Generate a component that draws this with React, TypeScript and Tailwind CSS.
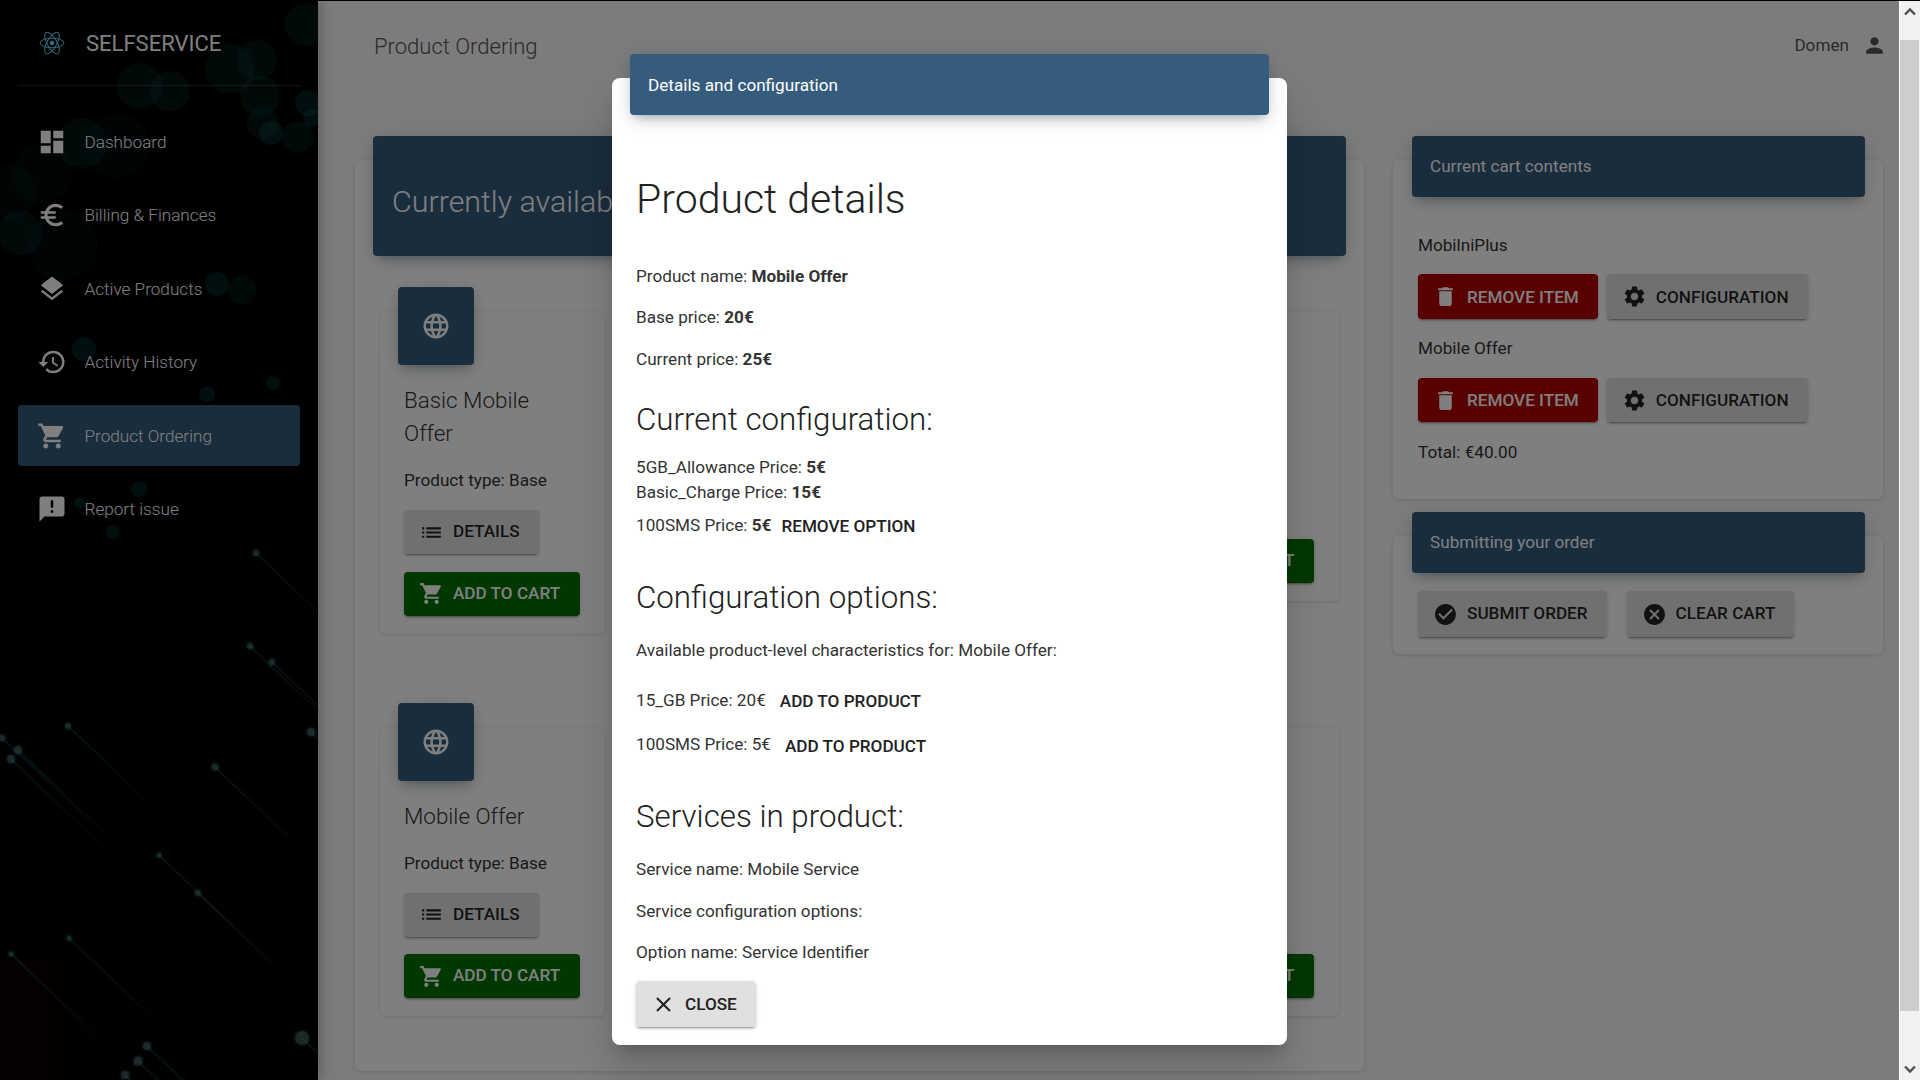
import React from "react";
import {
  MdDashboard, MdEuroSymbol, MdLayers, MdHistory, MdShoppingCart, MdAnnouncement, MdPerson,
  MdLanguage, MdList, MdDelete, MdSettings, MdCheckCircle, MdCancel, MdClose,
} from "react-icons/md";

const raised = "shadow-[0_2px_2px_rgba(0,0,0,.14),0_3px_1px_-2px_rgba(0,0,0,.2),0_1px_5px_rgba(0,0,0,.12)]";
const soft = "shadow-[0_1px_4px_rgba(0,0,0,.14)]";
const lifted = "shadow-[0_4px_20px_rgba(0,0,0,.14),0_7px_10px_-5px_rgba(56,94,128,.4)]";

const bokeh: [number, number, number][] = [
  [306, 24, 21], [230, 68, 25], [257, 59, 20], [140, 85, 23], [170, 90, 20], [260, 95, 20], [308, 102, 13],
  [263, 122, 16], [271, 132, 12], [298, 136, 16], [312, 117, 9], [82, 142, 25], [117, 145, 32], [43, 172, 30],
  [10, 192, 27], [63, 245, 35], [20, 232, 22], [217, 283, 12], [242, 289, 14], [84, 348, 12], [207, 393, 8],
  [273, 382, 7], [139, 488, 8], [80, 502, 6], [113, 531, 7],
];
const sparks: [number, number, number][] = [
  [256, 552, 3], [250, 645, 3], [272, 661, 3], [311, 731, 4], [68, 725, 3], [2, 737, 3], [18, 749, 4], [11, 758, 4],
  [215, 766, 3.5], [159, 854, 2.5], [198, 892, 3], [69, 937, 2.5], [11, 953, 2.5], [302, 1037, 7], [147, 1045, 4], [138, 1060, 4.5], [125, 1074, 4],
];

function SidebarArt() {
  return (
    <svg className="absolute inset-0" width="318" height="1079" viewBox="0 0 318 1079">
      <defs>
        <linearGradient id="redglow" x1="0" y1="0" x2="1" y2="0">
          <stop offset="0" stopColor="#5a0018" stopOpacity="0.16" />
          <stop offset="1" stopColor="#5a0018" stopOpacity="0" />
        </linearGradient>
        <linearGradient id="trail" x1="0" y1="0" x2="1" y2="1">
          <stop offset="0" stopColor="#2a7a90" stopOpacity="0.3" />
          <stop offset="1" stopColor="#2a7a90" stopOpacity="0" />
        </linearGradient>
      </defs>
      <rect x="0" y="960" width="130" height="119" fill="url(#redglow)" />
      {bokeh.map(([x, y, r], i) => (
        <circle key={i} cx={x} cy={y} r={r} fill="#14797f" opacity={r < 14 ? 0.25 : r > 25 ? 0.07 : 0.15} />
      ))}
      {sparks.map(([x, y, r], i) => (
        <g key={i}>
          <line x1={x} y1={y} x2={x + 110} y2={y + 105} stroke="url(#trail)" strokeWidth="2" />
          <circle cx={x} cy={y} r={r + 2} fill="#2a8aa0" opacity="0.15" />
          <circle cx={x} cy={y} r={r} fill="#8fb5b5" opacity="0.36" />
        </g>
      ))}
    </svg>
  );
}

function ReactLogo() {
  return (
    <svg width="26" height="26" viewBox="-13 -13 26 26" fill="none" stroke="#61dafb" strokeWidth="1">
      <ellipse rx="12" ry="4.8" />
      <ellipse rx="12" ry="4.8" transform="rotate(60)" />
      <ellipse rx="12" ry="4.8" transform="rotate(120)" />
      <circle r="2.3" fill="#61dafb" stroke="none" />
    </svg>
  );
}

const nav = [
  { label: "Dashboard", icon: MdDashboard },
  { label: "Billing & Finances", icon: MdEuroSymbol },
  { label: "Active Products", icon: MdLayers },
  { label: "Activity History", icon: MdHistory },
  { label: "Product Ordering", icon: MdShoppingCart, active: true },
  { label: "Report issue", icon: MdAnnouncement },
];

function Sidebar() {
  return (
    <aside className="relative w-[318px] shrink-0 bg-black shadow-[0_0_14px_rgba(0,0,0,.35)] overflow-hidden">
      <SidebarArt />
      <div className="relative">
        <div className="mx-[18px] h-[85px] border-b border-[#777777]/30 flex items-center pl-[21px] gap-[21px]">
          <ReactLogo />
          <span className="text-[22px] text-white">SELFSERVICE</span>
        </div>
        <nav className="mt-[25px] mx-[18px] flex flex-col gap-[12.5px]">
          {nav.map((n) => {
            const Icon = n.icon;
            return (
              <div
                key={n.label}
                className={`h-[61px] rounded flex items-center pl-[19px] gap-[17.5px] text-[17.15px] font-light text-white ${n.active ? "bg-[#355a7b]" : ""}`}
              >
                <Icon size={30} />
                <span className="pt-0.5">{n.label}</span>
              </div>
            );
          })}
        </nav>
      </div>
    </aside>
  );
}

function Btn({ icon: Icon, label, tone, className = "" }: { icon: any; label: string; tone: "gray" | "green" | "red"; className?: string }) {
  const tones = {
    gray: "bg-[#e0e0e0] text-black/85",
    green: "bg-[#007000] text-white",
    red: "bg-[#b00000] text-white",
  };
  return (
    <div className={`flex items-center pl-[15px] pr-[19px] gap-[9px] rounded text-[17.15px] font-medium uppercase whitespace-nowrap w-fit ${raised} ${tones[tone]} ${className}`}>
      <Icon size={25} className="shrink-0" />
      <span>{label}</span>
    </div>
  );
}

function ProductCard({ title }: { title: string }) {
  return (
    <div className={`w-[225px] self-start bg-white rounded-md pl-6 pr-4 pb-[18px] ${soft}`}>
      <div className={`-mt-[25px] -ml-1.5 w-[76px] h-[78px] rounded bg-[#355a7b] flex items-center justify-center text-white ${lifted}`}>
        <MdLanguage size={30} />
      </div>
      <h4 className="mt-[19px] pr-5 text-[22.4px] leading-[33px] font-light text-[#333333]">{title}</h4>
      <p className="mt-[18px] text-[17.15px] leading-6 text-[#333333]">Product type: Base</p>
      <Btn icon={MdList} label="Details" tone="gray" className="mt-[18px] h-[44px]" />
      <Btn icon={MdShoppingCart} label="Add to cart" tone="green" className="mt-[17.5px] h-[44px] pr-5 min-w-[176px]" />
    </div>
  );
}

function PanelHeader({ children, className }: { children: React.ReactNode; className: string }) {
  return <div className={`rounded bg-[#355a7b] flex items-center text-white ${lifted} ${className}`}>{children}</div>;
}

function Main() {
  return (
    <main className="flex-1 min-w-0 bg-[#f8f8f8]">
      <header className="h-[90px] flex items-center pl-[56px] pr-[12px] justify-between">
        <span className="text-[22px] font-light text-[#555555]">Product Ordering</span>
        <div className="flex items-center gap-[13px] text-[17.15px] text-[#555555]">
          <span>Domen</span>
          <MdPerson size={25} />
        </div>
      </header>
      <div className="mt-[69px] pl-[37px] flex items-start gap-[29px]">
        <section className={`w-[1009px] bg-white rounded-md pb-[55px] ${soft}`}>
          <PanelHeader className="-mt-6 mx-[18px] h-[120px] pl-[19px] pt-3 text-[30.4px] font-light whitespace-nowrap">
            Currently available products
          </PanelHeader>
          <div className="mt-[56px] mx-[25px] grid grid-cols-4 gap-x-5 gap-y-[94px]">
            <ProductCard title="Basic Mobile Offer" />
            <div />
            <div />
            <ProductCard title="Mobilni" />
            <ProductCard title="Mobile Offer" />
            <div />
            <div />
            <ProductCard title="Mobilni" />
          </div>
        </section>
        <div className="w-[490px] flex flex-col">
          <section className={`bg-white rounded-md pb-[35px] ${soft}`}>
            <PanelHeader className="-mt-6 ml-[19px] mr-[18px] h-[61px] pl-[18px] text-[17.15px]">Current cart contents</PanelHeader>
            <div className="px-[25px] text-[17.15px] leading-6 text-[#333333]">
              <p className="mt-9">MobilniPlus</p>
              <div className="mt-[17px] flex gap-[9px]">
                <Btn icon={MdDelete} label="Remove item" tone="red" className="h-[45px]" />
                <Btn icon={MdSettings} label="Configuration" tone="gray" className="h-[45px]" />
              </div>
              <p className="mt-[17px]">Mobile Offer</p>
              <div className="mt-[18px] flex gap-[9px]">
                <Btn icon={MdDelete} label="Remove item" tone="red" className="h-[44px]" />
                <Btn icon={MdSettings} label="Configuration" tone="gray" className="h-[44px]" />
              </div>
              <p className="mt-[18px]">Total: €40.00</p>
            </div>
          </section>
          <section className={`mt-[37px] bg-white rounded-md pb-[17px] ${soft}`}>
            <PanelHeader className="-mt-6 ml-[19px] mr-[18px] h-[61px] pl-[18px] text-[17.15px]">Submitting your order</PanelHeader>
            <div className="mt-[18px] px-[25px] flex gap-5">
              <Btn icon={MdCheckCircle} label="Submit order" tone="gray" className="h-[46px]" />
              <Btn icon={MdCancel} label="Clear cart" tone="gray" className="h-[46px]" />
            </div>
          </section>
        </div>
      </div>
    </main>
  );
}

function Action({ children, className = "" }: { children: React.ReactNode; className?: string }) {
  return <span className={`text-[17.15px] font-medium uppercase text-[#222222] ${className}`}>{children}</span>;
}

function Modal() {
  return (
    <div className="absolute inset-0 bg-black/50 flex justify-center items-start pt-[77px]">
      <div className="w-[675px] h-[967px] bg-white rounded-lg shadow-[0_11px_15px_-7px_rgba(0,0,0,.2),0_24px_38px_3px_rgba(0,0,0,.14)] text-[17.15px] leading-6 text-[#333333]">
        <div className={`-mt-6 mx-[18px] h-[61px] rounded bg-[#365c7d] text-white flex items-center pl-[18px] ${lifted}`}>
          Details and configuration
        </div>
        <div className="px-6">
          <h2 className="mt-[58px] text-[41px] leading-[53px] font-light text-[#222222]">Product details</h2>
          <p className="mt-[38px]">Product name: <b className="font-bold">Mobile Offer</b></p>
          <p className="mt-[17px]">Base price: <b className="font-bold">20€</b></p>
          <p className="mt-[18px]">Current price: <b className="font-bold">25€</b></p>
          <h3 className="mt-[31px] text-[31.3px] leading-9 font-light text-[#222222]">Current configuration:</h3>
          <p className="mt-[17px]">5GB_Allowance Price: <b className="font-bold">5€</b></p>
          <p className="mt-px">Basic_Charge Price: <b className="font-bold">15€</b></p>
          <p className="mt-[9px]">100SMS Price: <b className="font-bold">5€</b><Action className="ml-[10px] relative top-px">Remove option</Action></p>
          <h3 className="mt-[43px] text-[31.3px] leading-9 font-light text-[#222222]">Configuration options:</h3>
          <p className="mt-[22px]">Available product-level characteristics for: Mobile Offer:</p>
          <p className="mt-[26px]">15_GB Price: 20€<Action className="ml-[14px] relative top-px">Add to product</Action></p>
          <p className="mt-[20px]">100SMS Price: 5€<Action className="ml-[14px] relative top-0.5">Add to product</Action></p>
          <h3 className="mt-[43px] text-[31.3px] leading-9 font-light text-[#222222]">Services in product:</h3>
          <p className="mt-[22px]">Service name: Mobile Service</p>
          <p className="mt-[18px]">Service configuration options:</p>
          <p className="mt-[17px]">Option name: Service Identifier</p>
          <div className={`mt-[17px] w-[120px] h-[46px] rounded bg-[#e0e0e0] flex items-center pl-[15px] gap-[9px] text-[17.15px] font-medium uppercase text-[#222222] ${raised}`}>
            <MdClose size={25} />
            <span>Close</span>
          </div>
        </div>
      </div>
    </div>
  );
}

function Scrollbar() {
  return (
    <div className="w-[21px] shrink-0 bg-[#f1f1f1] flex flex-col border-l border-white">
      <div className="h-[39px] flex justify-center pt-[6px]">
        <svg width="12" height="9" viewBox="0 0 12 9" fill="none" stroke="#505050" strokeWidth="2.4"><path d="M1 7.5 L6 2.5 L11 7.5" /></svg>
      </div>
      <div className="flex-1 bg-[#cdcdcd] mr-px" />
      <div className="h-[69px] flex justify-center items-end pb-[6px]">
        <svg width="12" height="9" viewBox="0 0 12 9" fill="none" stroke="#505050" strokeWidth="2.4"><path d="M1 1.5 L6 6.5 L11 1.5" /></svg>
      </div>
    </div>
  );
}

export default function App() {
  return (
    <div className="h-screen w-full overflow-hidden flex flex-col font-[Roboto,sans-serif]">
      <div className="h-px bg-black shrink-0" />
      <div className="flex-1 flex min-h-0">
        <div className="relative flex-1 min-w-0 flex overflow-hidden">
          <Sidebar />
          <Main />
          <Modal />
        </div>
        <Scrollbar />
      </div>
    </div>
  );
}
